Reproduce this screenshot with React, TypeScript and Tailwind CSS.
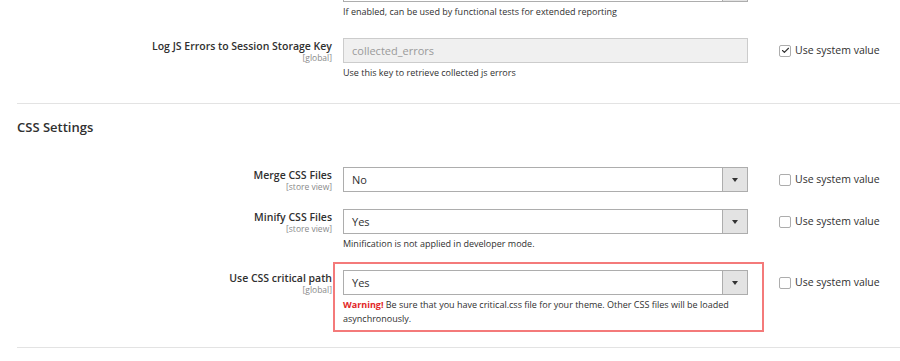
import { Check } from 'lucide-react';

function Scope({ text }: { text: string }) {
  return <div className="text-[8.5px] leading-[10px] text-[#8a8a8a]">{text}</div>;
}

function Label({ title, scope }: { title: string; scope: string }) {
  return (
    <div className="w-[332px] shrink-0 text-right pt-[1px]">
      <div className="text-[10.5px] leading-[14px] font-semibold text-[#303030]">{title}</div>
      <Scope text={scope} />
    </div>
  );
}

function SystemValue({ checked = false }: { checked?: boolean }) {
  return (
    <label className="flex items-center gap-[4px] h-[25px] text-[10.5px] text-[#303030]">
      <span className="h-[12px] w-[12px] rounded-[2px] border border-[#adadad] bg-white flex items-center justify-center">
        {checked && <Check size={9} strokeWidth={3} className="text-[#303030]" />}
      </span>
      Use system value
    </label>
  );
}

function Select({ value }: { value: string }) {
  return (
    <div className="h-[25px] w-[405px] flex border border-[#adadad] bg-white">
      <div className="flex-1 pl-[8px] text-[11px] leading-[23px] text-[#303030]">{value}</div>
      <div className="w-[25px] border-l border-[#adadad] bg-[#e3e3e3] flex items-center justify-center">
        <span className="w-0 h-0 border-x-[3px] border-x-transparent border-t-[4px] border-t-[#333]" />
      </div>
    </div>
  );
}

function Note({ children }: { children: React.ReactNode }) {
  return <div className="mt-[4px] text-[9px] leading-[12px] text-[#303030]">{children}</div>;
}

export default function App() {
  return (
    <div className="w-[900px] h-[361px] overflow-hidden bg-white" style={{ fontFamily: '"Open Sans", sans-serif' }}>
      <div className="flex">
        <div className="w-[343px] shrink-0" />
        <div className="w-[405px]">
          <div className="h-[2px] flex border-x border-b border-[#adadad]">
            <div className="flex-1" />
            <div className="w-[25px] border-l border-[#adadad] bg-[#e3e3e3]" />
          </div>
          <Note>If enabled, can be used by functional tests for extended reporting</Note>
        </div>
      </div>

      <div className="flex mt-[20px]">
        <Label title="Log JS Errors to Session Storage Key" scope="[global]" />
        <div className="ml-[11px] w-[405px]">
          <div className="h-[25px] border border-[#cccccc] bg-[#f0f0f0] pl-[8px] text-[11px] leading-[23px] text-[#9a9a9a]">
            collected_errors
          </div>
          <Note>Use this key to retrieve collected js errors</Note>
        </div>
        <div className="ml-[31px]">
          <SystemValue checked />
        </div>
      </div>

      <div className="ml-[17px] mt-[24px] border-t border-[#e3e3e3]" />

      <div className="ml-[17px] mt-[14px] text-[13px] leading-[18px] font-semibold text-[#303030]">CSS Settings</div>

      <div className="flex mt-[31px]">
        <Label title="Merge CSS Files" scope="[store view]" />
        <div className="ml-[11px]">
          <Select value="No" />
        </div>
        <div className="ml-[31px]">
          <SystemValue />
        </div>
      </div>

      <div className="flex mt-[17px]">
        <Label title="Minify CSS Files" scope="[store view]" />
        <div className="ml-[11px]">
          <Select value="Yes" />
          <Note>Minification is not applied in developer mode.</Note>
        </div>
        <div className="ml-[31px]">
          <SystemValue />
        </div>
      </div>

      <div className="flex mt-[20px]">
        <Label title="Use CSS critical path" scope="[global]" />
        <div className="ml-[11px] relative w-[405px]">
          <Select value="Yes" />
          <p className="mt-[3px] text-[9px] leading-[14px] text-[#303030]">
            <strong className="font-bold text-[#e22626]">Warning!</strong> Be sure that you have critical.css file for your theme. Other CSS files will be loaded asynchronously.
          </p>
          <div className="absolute -left-[10px] -top-[8px] -right-[16px] -bottom-[6px] border-[2px] border-[#f47a7a] pointer-events-none" />
        </div>
        <div className="ml-[31px]">
          <SystemValue />
        </div>
      </div>

      <div className="ml-[17px] mt-[21px] border-t border-[#e3e3e3]" />
    </div>
  );
}
